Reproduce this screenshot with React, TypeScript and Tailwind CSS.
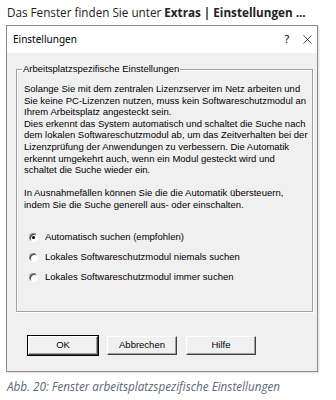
import { X } from "lucide-react";

const infoLines = [
  "Solange Sie mit dem zentralen Lizenzserver im Netz arbeiten und",
  "Sie keine PC-Lizenzen nutzen, muss kein Softwareschutzmodul an",
  "Ihrem Arbeitsplatz angesteckt sein.",
  "Dies erkennt das System automatisch und schaltet die Suche nach",
  "dem lokalen Softwareschutzmodul ab, um das Zeitverhalten bei der",
  "Lizenzprüfung der Anwendungen zu verbessern. Die Automatik",
  "erkennt umgekehrt auch, wenn ein Modul gesteckt wird und",
  "schaltet die Suche wieder ein.",
];

const hintLines = [
  "In Ausnahmefällen können Sie die die Automatik übersteuern,",
  "indem Sie die Suche generell aus- oder einschalten.",
];

const options = [
  { label: "Automatisch suchen (empfohlen)", checked: true },
  { label: "Lokales Softwareschutzmodul niemals suchen", checked: false },
  { label: "Lokales Softwareschutzmodul immer suchen", checked: false },
];

function Radio({ checked }: { checked: boolean }) {
  return (
    <span className="w-[9px] h-[9px] rounded-full border border-t-[#808080] border-l-[#808080] border-r-white border-b-white bg-white flex items-center justify-center shadow-[inset_1px_1px_0_#404040]">
      {checked && <span className="w-[3px] h-[3px] rounded-full bg-black" />}
    </span>
  );
}

function Button({ label, isDefault }: { label: string; isDefault?: boolean }) {
  return (
    <button
      className={`w-[70px] h-[19px] bg-[#f0f0f0] text-[9.5px] text-black border-t border-l border-t-white border-l-white border-r border-b border-r-[#404040] border-b-[#404040] shadow-[inset_-1px_-1px_0_#a0a0a0] ${
        isDefault ? "outline outline-1 outline-black" : ""
      }`}
    >
      {label}
    </button>
  );
}

export default function App() {
  return (
    <div className="w-[336px] h-[400px] bg-white overflow-hidden font-['Open_Sans',sans-serif]">
      <p className="pl-[7px] pt-[4px] text-[11.7px] leading-[17px] text-[#222] whitespace-nowrap">
        Das Fenster finden Sie unter <b>Extras | Einstellungen ...</b>
      </p>

      {/* Dialog */}
      <div className="ml-[6px] mt-[4px] w-[312px] h-[347px] border border-[#8c8c8c] bg-[#f0f0f0] flex flex-col shadow-[1px_1px_2px_rgba(0,0,0,0.15)]">
        <div className="h-[27px] bg-white flex items-center pl-[6px] pr-0 text-[10px] text-black font-['Noto_Sans',sans-serif]">
          <span className="flex-1">Einstellungen</span>
          <span className="w-[20px] text-center text-[11px]">?</span>
          <span className="w-[20px] flex justify-center">
            <X size={15} strokeWidth={1.1} />
          </span>
        </div>

        <div className="flex flex-col font-['Liberation_Sans',sans-serif] text-[9.5px] text-black">
          <fieldset className="mx-[9px] mt-[10px] h-[249px] border border-[#a0a0a0] shadow-[inset_1px_1px_0_white,1px_1px_0_white] pl-[7px] pr-[4px]">
            <legend className="ml-[-2px] px-[1px] leading-[12px]">Arbeitsplatzspezifische Einstellungen</legend>
            <div className="pt-[8px] leading-[11.6px] whitespace-nowrap">
              {infoLines.map((l) => (
                <div key={l}>{l}</div>
              ))}
              <div className="h-[11.6px]" />
              {hintLines.map((l) => (
                <div key={l}>{l}</div>
              ))}
            </div>
            <div className="mt-[21px] pl-[5px] flex flex-col gap-[8px]">
              {options.map((o) => (
                <div key={o.label} className="flex items-center gap-[7px] h-[12px]">
                  <Radio checked={o.checked} />
                  <span>{o.label}</span>
                </div>
              ))}
            </div>
          </fieldset>

          <div className="mt-[24px] pl-[21px] flex gap-[9px]">
            <Button label="OK" isDefault />
            <Button label="Abbrechen" />
            <Button label="Hilfe" />
          </div>
        </div>
      </div>

      <p className="pl-[7px] pt-[6px] italic text-[11.7px] leading-[16px] text-[#5a6878] whitespace-nowrap">
        Abb. 20: Fenster arbeitsplatzspezifische Einstellungen
      </p>
    </div>
  );
}
